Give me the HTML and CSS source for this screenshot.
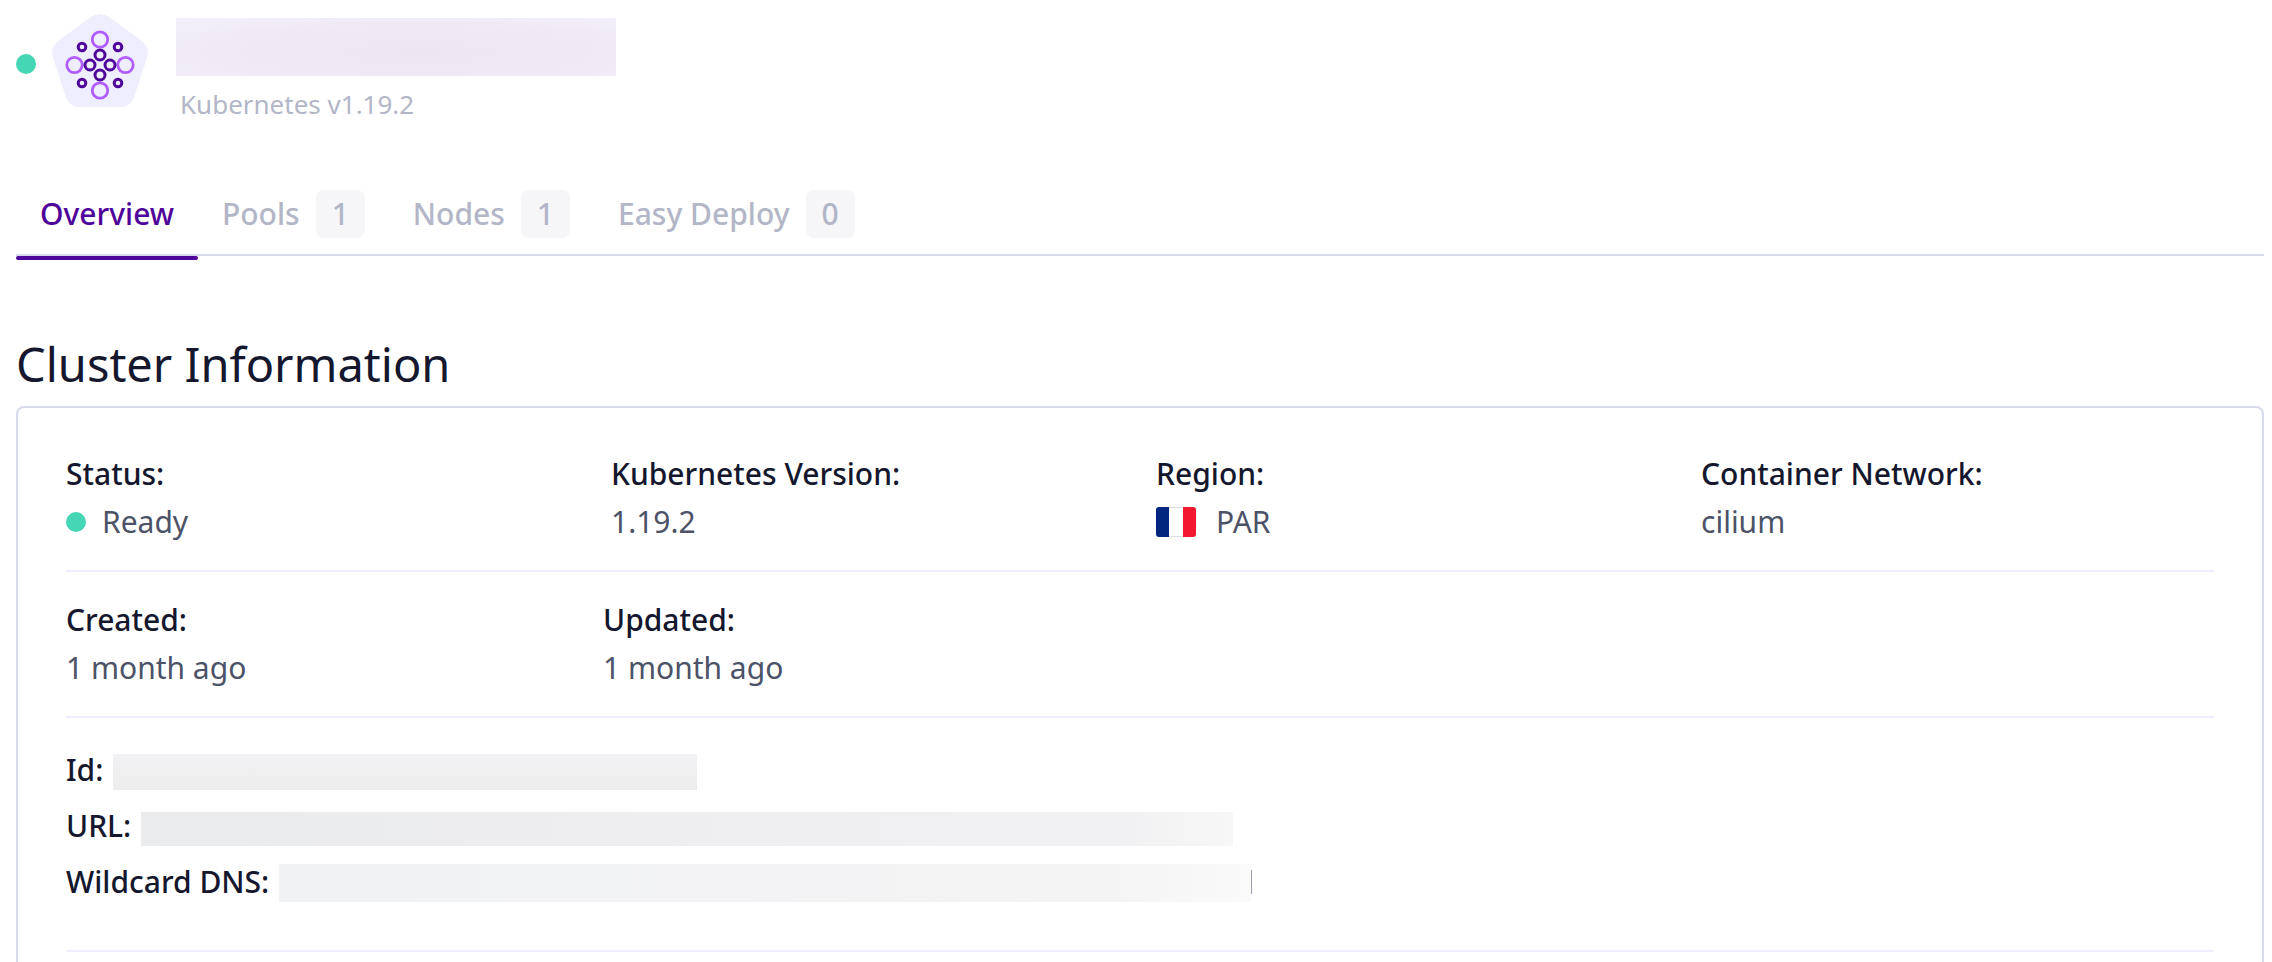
FILE: index.html
```html
<!DOCTYPE html>
<html lang="en">
<head>
<meta charset="utf-8">
<title>Cluster Overview</title>
<link rel="stylesheet" href="styles.css">
</head>
<body>
<header class="cluster-header">
  <span class="status-dot"></span>
  <svg class="cluster-icon" viewBox="0 0 96 93" width="96" height="93" aria-hidden="true">
    <path fill="#eeeeff" d="M39 2.800Q48-2.800 57 2.800L90 27Q97.500 33 95.500 42L82 83.500Q78.500 92.500 70 93H26Q17.500 92.500 14 83.500L.5 42Q-1.500 33 6 27Z"/>
    <g fill="none" stroke="#b05cff" stroke-width="2.800">
      <circle cx="48" cy="25.500" r="7.700"/><circle cx="48" cy="76.500" r="7.700"/>
      <circle cx="22.500" cy="51" r="7.700"/><circle cx="73.500" cy="51" r="7.700"/>
    </g>
    <g fill="none" stroke="#4f0599" stroke-width="3">
      <circle cx="48" cy="41" r="5"/><circle cx="48" cy="61" r="5"/>
      <circle cx="38" cy="51" r="5"/><circle cx="58" cy="51" r="5"/>
      <circle cx="30" cy="33" r="3.800"/><circle cx="66" cy="33" r="3.800"/>
      <circle cx="30" cy="69" r="3.800"/><circle cx="66" cy="69" r="3.800"/>
    </g>
  </svg>
  <div class="cluster-title">
    <div class="redacted redacted-name"></div>
    <p class="cluster-version">Kubernetes v1.19.2</p>
  </div>
</header>

<nav class="tabs">
  <a class="tab tab-active" href="#overview">Overview</a>
  <a class="tab" href="#pools">Pools <span class="count">1</span></a>
  <a class="tab" href="#nodes">Nodes <span class="count">1</span></a>
  <a class="tab" href="#easy-deploy">Easy Deploy <span class="count">0</span></a>
</nav>

<main>
  <h1 class="section-title">Cluster Information</h1>
  <section class="card">
    <dl class="row row-spaced">
      <div><dt>Status:</dt><dd class="with-icon"><span class="status-dot"></span>Ready</dd></div>
      <div><dt>Kubernetes Version:</dt><dd>1.19.2</dd></div>
      <div><dt>Region:</dt><dd class="with-icon">
        <svg class="flag" viewBox="0 0 40 30" width="40" height="30" aria-hidden="true">
          <rect x=".5" y=".5" width="39" height="29" rx="3" fill="#fff" stroke="#dcdde6"/>
          <path fill="#00267f" d="M13 0H3Q0 0 0 3V27Q0 30 3 30H13Z"/>
          <path fill="#f31830" d="M27 0H37Q40 0 40 3V27Q40 30 37 30H27Z"/>
        </svg>PAR</dd></div>
      <div><dt>Container Network:</dt><dd>cilium</dd></div>
    </dl>
    <dl class="row">
      <div><dt>Created:</dt><dd>1 month ago</dd></div>
      <div><dt>Updated:</dt><dd>1 month ago</dd></div>
    </dl>
    <dl class="endpoints">
      <div class="endpoint"><dt>Id:</dt><dd class="redacted redacted-id"></dd></div>
      <div class="endpoint"><dt>URL:</dt><dd class="redacted redacted-url"></dd></div>
      <div class="endpoint"><dt>Wildcard DNS:</dt><dd class="redacted redacted-dns"></dd></div>
    </dl>
  </section>
</main>
</body>
</html>
```
FILE: styles.css
```css
* {
  box-sizing: border-box;
}

html {
  overflow: hidden;
}

body {
  margin: 0;
  padding: 14px 8px 0 16px;
  background: #fff;
  color: #14172d;
  font-family: "Noto Sans", "Open Sans", sans-serif;
  font-size: 30px;
  line-height: 48px;
}

p, dl, dd, h1 {
  margin: 0;
}

.status-dot {
  flex: none;
  width: 20px;
  height: 20px;
  border-radius: 50%;
  background: #45d6b5;
}

.cluster-header {
  display: flex;
  align-items: flex-start;
}

.cluster-header .status-dot {
  margin: 40px 16px 0 0;
}

.cluster-icon {
  flex: none;
  margin-right: 28px;
}

.cluster-title {
  padding-top: 4px;
}

.cluster-version {
  padding-left: 4px;
  color: #b2b6c7;
  font-size: 26px;
  line-height: 56px;
}

.redacted-name {
  width: 440px;
  height: 58px;
  background: radial-gradient(ellipse at 55% 60%, #ece6f3, #efeaf6 60%, #f4f0f9);
}

.tabs {
  display: flex;
  margin-top: 48px;
  border-bottom: 2px solid #d6daea;
}

.tab {
  display: flex;
  align-items: center;
  gap: 16px;
  height: 80px;
  padding: 0 24px 8px;
  margin-bottom: -6px;
  border-bottom: 4px solid transparent;
  color: #b2b6c7;
  font-weight: 500;
  text-decoration: none;
}

.tab-active {
  position: relative;
  color: #4f0599;
}

.tab-active::after {
  content: "";
  position: absolute;
  left: 0;
  right: 0;
  bottom: -4px;
  height: 4px;
  border-radius: 2px;
  background: #4f0599;
}

.count {
  padding: 0 16px;
  border-radius: 8px;
  background: #f6f6f9;
}

.section-title {
  margin-top: 72px;
  font-size: 47px;
  font-weight: 400;
  line-height: 72px;
}

.card {
  margin-top: 6px;
  padding: 42px 48px 48px;
  border: 2px solid #d6daea;
  border-radius: 8px;
}

.row {
  display: grid;
  grid-template-columns: repeat(4, 1fr);
  padding: 24px 0;
  border-bottom: 2px solid #eeeeff;
}

.row-spaced {
  column-gap: 32px;
  padding-top: 0;
}

dt {
  font-weight: 500;
}

dd {
  color: #4c5267;
}

.with-icon {
  display: flex;
  align-items: center;
  gap: 16px;
}

.flag {
  margin-right: 4px;
}

.endpoints {
  padding: 24px 0 40px;
  border-bottom: 2px solid #eeeeff;
  line-height: 56px;
}

.endpoint {
  display: flex;
  align-items: flex-end;
  gap: 10px;
  height: 56px;
}

.endpoint .redacted {
  margin-bottom: 8px;
}

.redacted-id {
  width: 584px;
  height: 36px;
  background: linear-gradient(#f2f2f4, #ededee);
}

.redacted-url {
  width: 1092px;
  height: 34px;
  background: linear-gradient(90deg, #eaebed, #efeff1 60%, #f1f1f3 90%, #f7f7f7);
}

.redacted-dns {
  width: 973px;
  height: 38px;
  background:
    linear-gradient(#9a9cb0, #9a9cb0) right 6px / 1px 24px no-repeat,
    linear-gradient(90deg, #f1f2f4, #f4f4f5 85%, #fafafa) left / 972px 100% no-repeat;
}
```
